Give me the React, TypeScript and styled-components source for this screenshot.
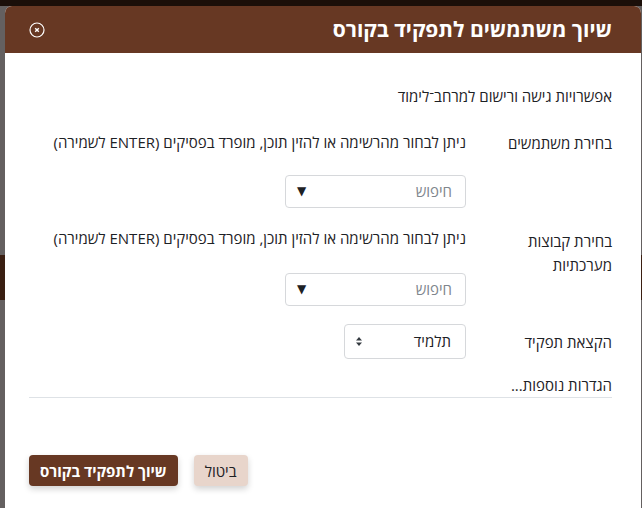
import React from "react";
import styled, { createGlobalStyle } from "styled-components";

const Global = createGlobalStyle`
  html, body {
    margin: 0;
    padding: 0;
    height: 100%;
    overflow: hidden;
  }
  body {
    background:
      linear-gradient(#1b0f09 0 6px, transparent 6px),
      linear-gradient(transparent 255px, #3a1f12 255px 300px, transparent 300px),
      #646060;
    font-family: "Open Sans", "Liberation Sans", "DejaVu Sans", sans-serif;
    color: #1d2125;
  }
`;

const Backdrop = styled.div`
  padding: 6px 1px 0 5px;
  height: 508px;
  box-sizing: border-box;
`;

const Dialog = styled.div`
  direction: rtl;
  background: #fff;
  border-radius: 7px 7px 0 0;
  height: 100%;
  overflow: hidden;
  display: flex;
  flex-direction: column;
`;

const Header = styled.div`
  height: 47px;
  background: #673823;
  display: flex;
  align-items: center;
  justify-content: space-between;
  padding: 0 29px 0 24px;
  flex-shrink: 0;
`;

const Title = styled.h2`
  margin: 0;
  font-size: 21px;
  font-weight: 700;
  color: #fff;
  line-height: 1;
`;

const CloseButton = styled.button`
  border: 0;
  background: none;
  padding: 0;
  width: 16px;
  height: 16px;
  display: flex;
  color: #fff;
  margin-top: 1px;
`;

const Body = styled.div`
  padding: 33px 29px 0 24px;
  font-size: 15px;
  line-height: 21px;
`;

const Intro = styled.p`
  margin: 0 0 25px;
`;

const FormRow = styled.div<{ $gapAfter: number; $center?: boolean }>`
  display: flex;
  align-items: ${(p) => (p.$center ? "center" : "flex-start")};
  margin-bottom: ${(p) => p.$gapAfter}px;
`;

const Label = styled.div<{ $offset?: number }>`
  width: 146px;
  flex-shrink: 0;
  line-height: 24px;
  margin-top: ${(p) => p.$offset ?? -1}px;
`;

const Field = styled.div<{ $gap: number }>`
  display: flex;
  flex-direction: column;
  align-items: flex-start;
  gap: ${(p) => p.$gap}px;
`;

const Hint = styled.div`
  line-height: 21px;
`;

const SearchBox = styled.div`
  width: 181px;
  height: 33px;
  box-sizing: border-box;
  border: 1px solid #d6d8db;
  border-radius: 4px;
  display: flex;
  align-items: center;
  justify-content: space-between;
  padding: 0 13px 0 11px;
`;

const Placeholder = styled.span`
  color: #80868d;
`;

const DownArrow = styled.span`
  font-size: 12px;
  color: #1d2125;
  font-family: "DejaVu Sans", sans-serif;
`;

const SelectBox = styled.div`
  width: 122px;
  height: 35px;
  box-sizing: border-box;
  border: 1px solid #d6d8db;
  border-radius: 4px;
  display: flex;
  align-items: center;
  justify-content: space-between;
  padding: 0 14px 0 11px;
`;

const MoreLink = styled.div`
  padding-bottom: 1px;
  border-bottom: 1px solid #dee2e6;
`;

const Footer = styled.div`
  display: flex;
  gap: 16px;
  padding-top: 57px;
  justify-content: flex-end;
`;

const Button = styled.button<{ $primary?: boolean }>`
  height: 31px;
  border: 0;
  border-radius: 4px;
  padding: 0 11px;
  font-family: inherit;
  font-size: 15px;
  font-weight: ${(p) => (p.$primary ? 700 : 400)};
  background: ${(p) => (p.$primary ? "#673823" : "#e8d5cb")};
  color: ${(p) => (p.$primary ? "#fff" : "#1d2125")};
  box-shadow: 0 3px 6px rgba(0, 0, 0, 0.18);
`;

const CircleX = () => (
  <svg width="16" height="16" viewBox="0 0 16 16" fill="none" stroke="currentColor">
    <circle cx="8" cy="8" r="7" strokeWidth="1.2" />
    <path d="M6.2 6.2 L9.8 9.8 M9.8 6.2 L6.2 9.8" strokeWidth="1.4" />
  </svg>
);

const UpDown = () => (
  <svg width="6" height="9" viewBox="0 0 6 9" fill="#343a40">
    <path d="M3 0 L6 3.5 H0 Z" />
    <path d="M3 9 L6 5.5 H0 Z" />
  </svg>
);

export default function App() {
  return (
    <>
      <Global />
      <Backdrop>
        <Dialog>
          <Header>
            <Title>שיוך משתמשים לתפקיד בקורס</Title>
            <CloseButton aria-label="סגירה">
              <CircleX />
            </CloseButton>
          </Header>
          <Body>
            <Intro>אפשרויות גישה ורישום למרחב־לימוד</Intro>
            <FormRow $gapAfter={20}>
              <Label>בחירת משתמשים</Label>
              <Field $gap={22}>
                <Hint>ניתן לבחור מהרשימה או להזין תוכן, מופרד בפסיקים (ENTER לשמירה)</Hint>
                <SearchBox>
                  <Placeholder>חיפוש</Placeholder>
                  <DownArrow>▼</DownArrow>
                </SearchBox>
              </Field>
            </FormRow>
            <FormRow $gapAfter={18}>
              <Label $offset={1}>
                בחירת קבוצות
                <br />
                מערכתיות
              </Label>
              <Field $gap={24}>
                <Hint>ניתן לבחור מהרשימה או להזין תוכן, מופרד בפסיקים (ENTER לשמירה)</Hint>
                <SearchBox>
                  <Placeholder>חיפוש</Placeholder>
                  <DownArrow>▼</DownArrow>
                </SearchBox>
              </Field>
            </FormRow>
            <FormRow $gapAfter={16} $center>
              <Label $offset={0}>הקצאת תפקיד</Label>
              <Field $gap={0}>
                <SelectBox>
                  <span>תלמיד</span>
                  <UpDown />
                </SelectBox>
              </Field>
            </FormRow>
            <MoreLink>הגדרות נוספות...</MoreLink>
            <Footer>
              <Button>ביטול</Button>
              <Button $primary>שיוך לתפקיד בקורס</Button>
            </Footer>
          </Body>
        </Dialog>
      </Backdrop>
    </>
  );
}
